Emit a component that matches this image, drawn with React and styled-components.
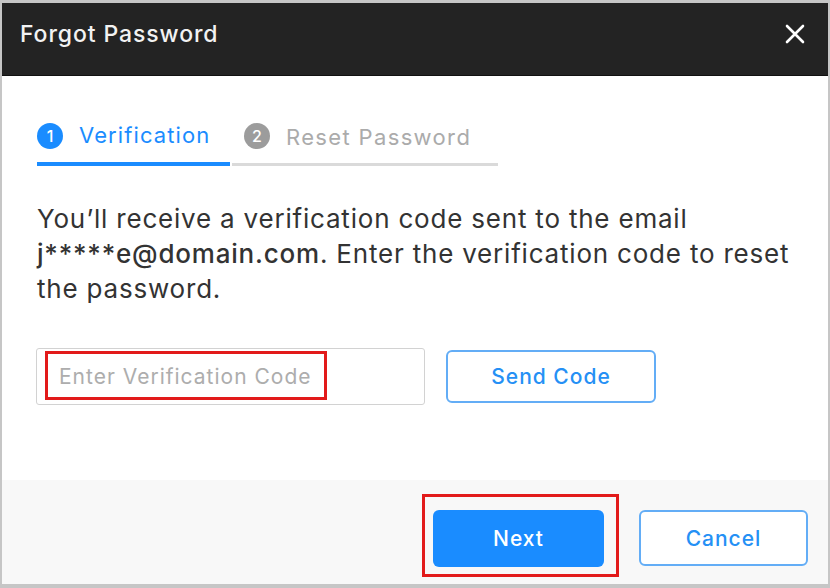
import React from "react";
import styled, { createGlobalStyle } from "styled-components";

const GlobalStyle = createGlobalStyle`
	html, body {
		margin: 0;
		padding: 0;
		background: #ffffff;
	}
	* {
		box-sizing: border-box;
	}
`;

const Dialog = styled.div`
	width: 830px;
	height: 588px;
	display: flex;
	flex-direction: column;
	border: 2px solid #c6c6c6;
	border-top-width: 3px;
	border-bottom-width: 4px;
	font-family: "Inter", "Noto Sans", sans-serif;
	background: #ffffff;
`;

const Header = styled.div`
	height: 73px;
	flex: none;
	display: flex;
	align-items: center;
	justify-content: space-between;
	padding: 0 22px 10px 18px;
	background: #232323; // near black
	border-bottom: 1px solid #111;
`;

const Title = styled.h1`
	margin: 0;
	color: #f2f2f2;
	font-size: 23px;
	font-weight: 500;
	letter-spacing: 0.9px;
`;

const CloseButton = styled.button`
	border: none;
	background: none;
	padding: 0;
	width: 22px;
	height: 22px;
	display: flex;
	align-items: center;
	justify-content: center;
	cursor: pointer;
`;

const Body = styled.div`
	flex: 1;
	padding: 46px 35px 0 35px;
`;

const Steps = styled.div`
	display: flex;
	align-items: flex-end;
`;

const Step = styled.div`
	width: ${(p) => p.width}px;
	padding-left: ${(p) => p.indent}px;
	padding-bottom: 13px;
	display: flex;
	align-items: center;
	gap: 16px;
	border-bottom: ${(p) => (p.active ? "4px solid #1a8cff" : "3px solid #dadada")};
	margin-right: 2px;
`;

const StepNumber = styled.span`
	width: 26px;
	height: 26px;
	border-radius: 50%;
	display: flex;
	align-items: center;
	justify-content: center;
	flex: none;
	background: ${(p) => (p.active ? "#1a8cff" : "#9c9c9c")};
	color: #ffffff;
	font-size: 16px;
	font-weight: 500;
`;

const StepLabel = styled.span`
	font-size: 22px;
	letter-spacing: ${(p) => (p.active ? "1.1px" : "1.35px")};
	color: ${(p) => (p.active ? "#1a8cff" : "#ababab")};
	margin-top: ${(p) => (p.active ? "-3px" : "2px")};
`;

const Message = styled.p`
	margin: 35px 0 0 0;
	font-size: 26px;
	line-height: 35px;
	letter-spacing: 0.8px;
	color: #333333;
`;

const Strong = styled.b`
	font-weight: 500;
`;

const CodeRow = styled.div`
	margin-top: 42px;
	display: flex;
	align-items: center;
	gap: 21px;
`;

const InputWrap = styled.div`
	position: relative;
	width: 389px;
	height: 57px;
	margin-left: -1px;
`;

const CodeInput = styled.input`
	width: 100%;
	height: 100%;
	border: 1.5px solid #d2d2d2;
	border-radius: 3px;
	padding: 0 0 0 22px;
	font-family: inherit;
	font-size: 21px;
	letter-spacing: 1px;
	color: #333;
	outline: none;

	&::placeholder {
		color: #adadad;
	}
`;

const Highlight = styled.span`
	position: absolute;
	left: ${(p) => p.left}px;
	top: ${(p) => p.top}px;
	width: ${(p) => p.w}px;
	height: ${(p) => p.h}px;
	border: 3px solid #e21a1a;
	pointer-events: none;
`;

const OutlineButton = styled.button`
	width: ${(p) => p.width}px;
	height: ${(p) => p.height}px;
	border: 2px solid #63adf6;
	border-radius: 6px;
	background: #ffffff;
	color: #2590f5;
	font-family: inherit;
	font-size: 21px;
	font-weight: 500;
	letter-spacing: 1px;
	cursor: pointer;
`;

const Footer = styled.div`
	height: 104px;
	flex: none;
	background: #f8f8f8;
	display: flex;
	justify-content: flex-end;
	align-items: flex-start;
	gap: 35px;
	padding: 30px 20px 0 0;
`;

const PrimaryWrap = styled.div`
	position: relative;
`;

const PrimaryButton = styled.button`
	width: 171px;
	height: 57px;
	border: none;
	border-radius: 6px;
	background: #1a8cff;
	color: #ffffff;
	font-family: inherit;
	font-size: 21px;
	font-weight: 500;
	letter-spacing: 1px;
	cursor: pointer;
	display: block;
`;

const CloseIcon = () => (
	<svg width="20" height="20" viewBox="0 0 20 20">
		<path d="M2 2 L18 18 M18 2 L2 18" stroke="#ffffff" strokeWidth="2.6" strokeLinecap="round" />
	</svg>
);

const App = () => {
	return (
		<>
			<GlobalStyle />
			<Dialog>
				<Header>
					<Title>Forgot Password</Title>
					<CloseButton aria-label="Close">
						<CloseIcon />
					</CloseButton>
				</Header>
				<Body>
					<Steps>
						<Step active width={193} indent={0}>
							<StepNumber active>1</StepNumber>
							<StepLabel active>Verification</StepLabel>
						</Step>
						<Step width={266} indent={12}>
							<StepNumber>2</StepNumber>
							<StepLabel>Reset Password</StepLabel>
						</Step>
					</Steps>
					<Message>
						You’ll receive a verification code sent to the email <Strong>j*****e@domain.com</Strong>. Enter
						the verification code to reset the password.
					</Message>
					<CodeRow>
						<InputWrap>
							<CodeInput placeholder="Enter Verification Code" />
							<Highlight left={9} top={3} w={282} h={49} />
						</InputWrap>
						<OutlineButton width={210} height={53}>
							Send Code
						</OutlineButton>
					</CodeRow>
				</Body>
				<Footer>
					<PrimaryWrap>
						<PrimaryButton>Next</PrimaryButton>
						<Highlight left={-11} top={-16} w={197} h={83} />
					</PrimaryWrap>
					<OutlineButton width={169} height={56}>
						Cancel
					</OutlineButton>
				</Footer>
			</Dialog>
		</>
	);
};

export default App;
